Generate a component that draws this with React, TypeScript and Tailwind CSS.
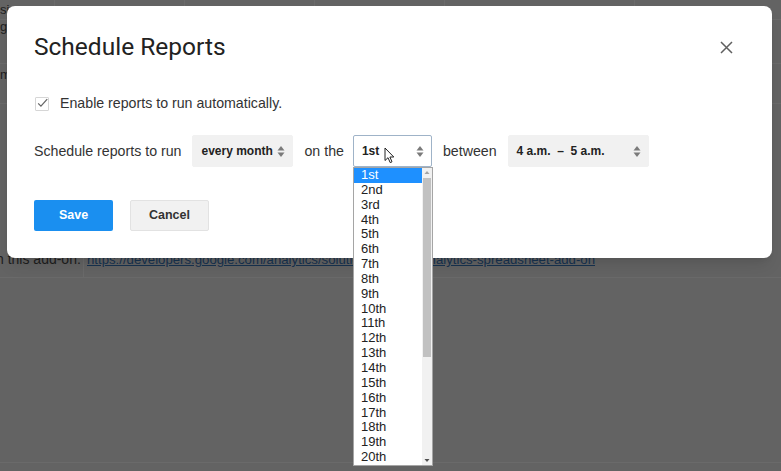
import React from 'react';

const days = [
  '1st', '2nd', '3rd', '4th', '5th', '6th', '7th', '8th', '9th', '10th',
  '11th', '12th', '13th', '14th', '15th', '16th', '17th', '18th', '19th', '20th',
];

const Arrows: React.FC = () => (
  <svg width="8" height="13" viewBox="0 0 8 13" className="shrink-0">
    <path d="M4 1 L7.5 5.5 H0.5 Z" fill="#7a7a7a" />
    <path d="M4 12 L7.5 7.5 H0.5 Z" fill="#7a7a7a" />
  </svg>
);

const SelectBox: React.FC<{ label: string; width: string; focused?: boolean }> = ({ label, width, focused }) => (
  <div
    className={`${width} h-[32px] flex items-center justify-between pl-[8px] pr-[7px] rounded-[2px] text-[12px] font-bold text-[#222] ${
      focused ? 'bg-white border border-[#9fb3c8]' : 'bg-[#f1f1f1] border border-[#f1f1f1]'
    }`}
  >
    <span className="whitespace-pre">{label}</span>
    <Arrows />
  </div>
);

export default function App() {
  return (
    <div
      className="relative w-[781px] h-[471px] overflow-hidden bg-[#636363]"
      style={{ fontFamily: '"Liberation Sans", Arial, sans-serif' }}
    >
      {/* sheet behind the overlay */}
      <div className="flex flex-col text-[#1e1e1e]">
        <div className="h-[20px] border-b border-[#6a6a6a] flex">
          <div className="w-[55px] border-r border-[#6a6a6a] text-[13px] leading-[20px]">si</div>
          <div className="w-[130px] border-r border-[#6a6a6a]" />
          <div className="w-[130px] border-r border-[#6a6a6a]" />
          <div className="w-[130px] border-r border-[#6a6a6a]" />
          <div className="w-[190px] border-r border-[#6a6a6a]" />
        </div>
        <div className="h-[44px] border-b border-[#6a6a6a] text-[13px] leading-[14px]">g</div>
        <div className="h-[40px] border-b border-[#6a6a6a] text-[13px] leading-[22px]">m</div>
        <div className="h-[144px]" />
        <div className="h-[30px] flex items-end border-b border-[#6a6a6a] text-[13.2px]">
          <div className="w-[84px] border-r border-[#6a6a6a] pb-[7px] whitespace-nowrap overflow-hidden">
            <span className="ml-[-4px] text-[14px]">h this add-on:</span>
          </div>
          <a className="pl-[3px] pb-[7px] text-[#17324f] underline whitespace-nowrap">
            https://developers.google.com/analytics/solutions/google-analytics-spreadsheet-add-on
          </a>
        </div>
        <div className="h-[185px] border-b border-[#6a6a6a]" />
      </div>

      {/* dialog */}
      <div className="absolute left-[7px] top-[6px] w-[765px] h-[252px] rounded-[8px] bg-white shadow-lg pl-[27px] pr-[39px] pt-[25px]">
        <div className="flex items-center justify-between">
          <h2 className="text-[24.5px] leading-[32px] text-[#222]" style={{ fontFamily: 'Roboto, sans-serif' }}>
            Schedule Reports
          </h2>
          <svg width="13" height="13" viewBox="0 0 13 13">
            <path d="M1 1 L12 12 M12 1 L1 12" stroke="#5f5f5f" strokeWidth="1.5" />
          </svg>
        </div>

        <div className="mt-[30px] flex items-center gap-[11px] text-[14.2px] text-[#333]">
          <div className="ml-[1px] w-[14px] h-[14px] border border-[#d6d6d6] rounded-[1px] flex items-center justify-center">
            <svg width="14" height="12" viewBox="0 0 14 12" className="-mt-[2px] ml-[1px]">
              <path d="M1.5 6.5 L5 10 L13 1" fill="none" stroke="#666" strokeWidth="1.6" />
            </svg>
          </div>
          <span>Enable reports to run automatically.</span>
        </div>

        <div className="mt-[21px] flex items-center text-[14.2px] text-[#333]">
          <span>Schedule reports to run</span>
          <div className="ml-[11px]">
            <SelectBox label="every month" width="w-[101px]" />
          </div>
          <span className="ml-[11px]">on the</span>
          <div className="ml-[9px]">
            <SelectBox label="1st" width="w-[79px]" focused />
          </div>
          <span className="ml-[11px]">between</span>
          <div className="ml-[11px]">
            <SelectBox label={'4 a.m.  –  5 a.m.'} width="w-[141px]" />
          </div>
        </div>

        <div className="mt-[33px] flex items-center gap-[17px] text-[12.5px] font-bold">
          <button className="w-[79px] h-[31px] rounded-[2px] bg-[#1a8ff0] text-white">Save</button>
          <button className="w-[79px] h-[31px] rounded-[2px] bg-[#f1f1f1] border border-[#e2e2e2] text-[#333]">
            Cancel
          </button>
        </div>
      </div>

      {/* open list of the day select */}
      <div className="absolute left-[353px] top-[167px] w-[80px] h-[299px] bg-white border border-[#a5a5a5] flex">
        <div className="flex-1 flex flex-col">
          {days.map((d, i) => (
            <div
              key={d}
              className={`h-[14.85px] leading-[14.85px] pl-[7px] text-[13px] ${
                i === 0 ? 'bg-[#1e90ff] text-white' : 'text-[#222]'
              }`}
            >
              {d}
            </div>
          ))}
        </div>
        <div className="w-[10px] bg-[#f1f1f1] flex flex-col items-center">
          <svg width="6" height="10" viewBox="0 0 6 10">
            <path d="M3 3 L5.5 6 H0.5 Z" fill="#a3a3a3" />
          </svg>
          <div className="w-[8px] h-[179px] bg-[#c1c1c1]" />
          <div className="flex-1" />
          <svg width="6" height="10" viewBox="0 0 6 10">
            <path d="M3 7 L5.5 4 H0.5 Z" fill="#505050" />
          </svg>
        </div>
      </div>

      {/* mouse pointer */}
      <svg className="absolute left-[384px] top-[147px]" width="11" height="17" viewBox="0 0 11 17">
        <path d="M1 1 L1 13.5 L4 10.7 L6.2 15.6 L8 14.8 L5.9 10 L9.8 10 Z" fill="#fff" stroke="#222" strokeWidth="1" />
      </svg>
    </div>
  );
}
